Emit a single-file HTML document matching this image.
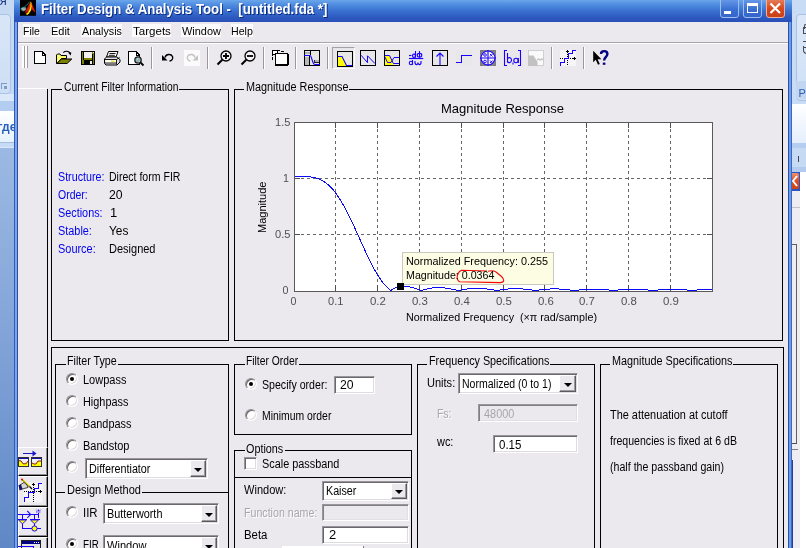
<!DOCTYPE html>
<html><head><meta charset="utf-8"><title>Filter Design &amp; Analysis Tool</title>
<style>
html,body{margin:0;padding:0;}
body{width:806px;height:548px;overflow:hidden;position:relative;background:#ebe9ed;font-family:"Liberation Sans",sans-serif;font-size:11px;color:#000;}
.a{position:absolute;}
.t{position:absolute;white-space:nowrap;line-height:12px;font-size:12px;transform-origin:0 0;margin-left:-0.5px;}
.p{font-size:10.67px;}
.lb{height:12px;background:#ebe9ed;}
.bl{color:#0000f0;}
.hl{position:absolute;height:1px;background:#000;}
.vl{position:absolute;width:1px;background:#000;}
.edit{position:absolute;background:#fff;box-sizing:border-box;border:1px solid;border-color:#98969a #fff #fff #98969a;box-shadow:inset 1px 1px 0 #6a686e, inset -1px -1px 0 #dedce0;}
.edit.dis{background:#ebe9ed;box-shadow:inset 1px 1px 0 #808080, inset -1px -1px 0 #e0e0e0;}
.dd{position:absolute;box-sizing:border-box;background:#ebe9ed;border:1px solid;border-color:#fff #5c5a5e #5c5a5e #fff;box-shadow:inset -1px -1px 0 #9c9a9e;}
.dd:after{content:"";position:absolute;left:50%;top:50%;margin:-1px 0 0 -4px;border:4px solid transparent;border-top:4px solid #000;border-bottom:none;}
.radio{position:absolute;width:12px;height:12px;box-sizing:border-box;border-radius:50%;background:#fff;border:1px solid;border-color:#908e92 #fff #fff #908e92;box-shadow:inset 1px 1px 0 #66646a, inset -1px -1px 0 #dcdade;}
.radio.on:after{content:"";position:absolute;left:3px;top:3px;width:4px;height:4px;border-radius:50%;background:#000;}
#root{position:absolute;left:0;top:0;width:806px;height:548px;overflow:hidden;will-change:transform;}
</style></head><body><div id="root">
<!-- left background strip (other app) -->
<div class="a" style="left:0;top:0;width:14px;height:548px;background:#c6d9f3;"></div>
<div class="a" style="left:-6px;top:14px;width:15px;height:78px;border:1px solid #aac3e6;border-radius:4px;background:linear-gradient(#d9e6f7,#cddff5);"></div>
<div class="a" style="left:0;top:94px;width:14px;height:8px;background:#dbe8f9;"></div>
<div class="a" style="left:0;top:101px;width:14px;height:10px;background:#b3cdf0;"></div>
<div class="a" style="left:0;top:111px;width:14px;height:31px;background:linear-gradient(#ffffff,#e6f2fc);"></div>
<div class="a" style="left:0;top:142px;width:14px;height:1px;background:#a5bedd;"></div>
<div class="a" style="left:0;top:143px;width:14px;height:4px;background:#c5dbf7;"></div>
<div class="a" style="left:0;top:147px;width:14px;height:1px;background:#dbe7f7;"></div>
<div class="a" style="left:0;top:148px;width:14px;height:400px;background:linear-gradient(#9bb9e2,#86a7da 40%,#5f88c6);"></div>
<div class="t" style="left:-7px;top:-6.5px;font-size:13px;line-height:13px;color:#1e3a8a;">ия</div>
<div class="t" style="left:-2px;top:121px;font-size:12px;line-height:13px;color:#2a5fc0;font-weight:bold;">где</div>
<div class="a" style="left:1px;top:83px;width:5px;height:5px;border:1px solid #7f9cc6;border-right:none;border-bottom:none;"></div>
<div class="a" style="left:4px;top:86px;width:3px;height:3px;background:#7f9cc6;"></div>

<!-- right background strip (other app) -->
<div class="a" style="left:792px;top:0;width:14px;height:548px;background:#fff;"></div>
<div class="a" style="left:792px;top:0;width:14px;height:104px;background:#c9dcf5;"></div>
<div class="a" style="left:796px;top:14px;width:14px;height:85px;border:1px solid #a9c2e4;border-radius:4px;background:linear-gradient(#dce8f8,#cfe0f6);"></div>
<div class="a" style="left:796px;top:81px;width:14px;height:18px;background:#c2d6f1;"></div>
<div class="a" style="left:803px;top:27px;width:4px;height:5px;border:1px solid #4a4a52;border-right:none;"></div><div class="a" style="left:804px;top:24px;width:4px;height:4px;border:1px solid #4a4a52;border-right:none;border-bottom:none;border-radius:2px 0 0 0;"></div>
<div class="a" style="left:803px;top:41px;width:5px;height:5px;border:1.5px solid #4a4a52;border-right:none;border-left:none;border-radius:0;"></div><div class="a" style="left:803px;top:46px;width:5px;height:7px;border:1.5px solid #4a4a52;border-right:none;border-top:none;border-radius:0 0 0 4px;"></div>
<div class="t" style="left:799px;top:87px;font-size:11px;color:#2d5fb5;">P</div>
<div class="a" style="left:792px;top:104px;width:14px;height:40px;background:linear-gradient(#ffffff,#e3edfb);"></div>
<div class="a" style="left:792px;top:143px;width:14px;height:5px;background:#b4cdf0;"></div>
<div class="a" style="left:792px;top:148px;width:14px;height:23px;background:#c7daf4;"></div>
<div class="a" style="left:798px;top:156px;width:1px;height:6px;background:#445;"></div>
<div class="a" style="left:792px;top:167px;width:14px;height:5px;background:#b2cbee;"></div>
<div class="a" style="left:792px;top:172px;width:14px;height:376px;background:#fff;"></div>
<div class="a" style="left:792px;top:172px;width:8px;height:376px;background:#efedf1;"></div>
<div class="a" style="left:792px;top:172px;width:8px;height:19px;background:#2a55c0;"></div>
<div class="a" style="left:792px;top:173px;width:7px;height:16px;border-radius:0 2px 2px 0;background:linear-gradient(#ee9270,#dc4c1e 50%,#d24418);"></div>
<svg class="a" style="left:792px;top:173px;" width="7" height="16"><path d="M5 3 L1 8 L5 13" stroke="#fff" stroke-width="2" fill="none"/></svg>
<div class="a" style="left:792px;top:207px;width:8px;height:1px;background:#c4c2c6;"></div>
<div class="a" style="left:792px;top:244px;width:5px;height:1px;background:#606060;"></div>
<div class="a" style="left:796px;top:244px;width:1px;height:200px;background:#606060;"></div>
<div class="a" style="left:792px;top:443px;width:5px;height:1px;background:#505050;"></div>
<div class="a" style="left:792px;top:449px;width:6px;height:1px;background:#808080;"></div>
<div class="a" style="left:791px;top:460px;width:2px;height:88px;background:#24409c;"></div>

<!-- window frame -->
<div class="a" style="left:14px;top:0;width:778px;height:548px;background:linear-gradient(90deg,#2e5cc0 0,#2e5cc0 1px,#7aa4e4 1px,#7aa4e4 3px,#2a4eb0 3px,#2a4eb0 4px);"></div>
<div class="a" style="left:14px;top:0;width:778px;height:22px;background:linear-gradient(#6ba6ea 0,#4f8ce0 22%,#3a70d0 50%,#2c58be 80%,#2a50b8 100%);"></div>
<div class="a" style="left:788px;top:22px;width:4px;height:526px;background:linear-gradient(90deg,#2a50b0 0,#2a50b0 1px,#6c9ce4 1px,#6c9ce4 3px,#3a68c8 3px,#3a68c8 4px);"></div>
<div class="a" style="left:18px;top:22px;width:770px;height:526px;background:#ebe9ed;"></div>

<!-- title icon -->
<svg class="a" style="left:20px;top:0;" width="16" height="16" viewBox="20 0 16 16">
<rect x="20" y="0" width="16" height="15.8" fill="#000"/>
<path d="M24.5 6.6 L27 5 L29.6 1.6" fill="none" stroke="#108080" stroke-width="0.9"/>
<path d="M20.8 8.6 L23 7.2 L25.6 7.4 L26 9.6 L24 11 L22 10.6 Z" fill="#a6a6a6" stroke="#28a8a8" stroke-width="0.6"/>
<path d="M25 11.5 L27 8 L29 4 L30.4 1.2 L30.6 6 L29.6 10 L27.2 13.6 L26 14 Z" fill="#b01008"/>
<path d="M27 10.2 L29.8 3.5 L30.6 8 L28.6 12 Z" fill="#e02808"/>
<path d="M26 14 L27 15 L28.6 14 L31 10.5 L32 6 L31.5 3 L30.8 1.5 L30.3 5 L29.8 9 L28 12.5 Z" fill="#ffee00"/>
<path d="M30.3 5.5 L30.8 1.5 L31.8 4.5 L31.9 7.2 L30.1 7.4 Z" fill="#ff9000"/>
<path d="M31.5 3 L33 6 L35.6 12.6 L34 11.6 L32.6 10 L31.7 9.6 L32 6 Z" fill="#e01800"/>
</svg>
<div class="t" style="left:41px;top:1px;font-size:14.5px;line-height:16px;font-weight:bold;color:#fff;text-shadow:1px 1px 0 #0a2a80;transform:scaleX(0.914);">Filter Design &amp; Analysis Tool -&nbsp; [untitled.fda *]</div>

<!-- caption buttons -->
<div class="a" style="left:720px;top:-3px;width:19px;height:21px;box-sizing:border-box;border:1px solid #9dbcf0;border-radius:3px;background:linear-gradient(#6ea0ea,#3a6fd2 60%,#3565c8);"></div>
<div class="a" style="left:724px;top:11px;width:7px;height:3px;background:#fff;"></div>
<div class="a" style="left:743px;top:-3px;width:19px;height:21px;box-sizing:border-box;border:1px solid #9dbcf0;border-radius:3px;background:linear-gradient(#6ea0ea,#3a6fd2 60%,#3565c8);"></div>
<div class="a" style="left:747px;top:3px;width:11px;height:10px;box-sizing:border-box;border:1px solid #fff;border-top:3px solid #fff;"></div>
<div class="a" style="left:766px;top:-3px;width:19px;height:21px;box-sizing:border-box;border:1px solid #f0b09a;border-radius:3px;background:linear-gradient(#e8896a,#d8481a 55%,#c8421a);"></div>
<svg class="a" style="left:766px;top:0;" width="19" height="18"><path d="M4.5 3.5 L14 13 M14 3.5 L4.5 13" stroke="#fff" stroke-width="2.2" fill="none"/></svg>

<!-- menu bar -->
<div class="a" style="left:18px;top:42px;width:770px;height:1px;background:#a8a6aa;"></div>
<div class="a" style="left:18px;top:43px;width:770px;height:1px;background:#fff;"></div>
<div class="a mnb" style="left:22.5px;width:17.5px;"></div><div class="t" style="left:23.5px;top:24.5px;font-size:11px;transform:scaleX(0.953);">File</div>
<div class="a mnb" style="left:50.5px;width:19.5px;"></div><div class="t" style="left:51.5px;top:24.5px;font-size:11px;transform:scaleX(0.996);">Edit</div>
<div class="a mnb" style="left:81.0px;width:40.5px;"></div><div class="t" style="left:82.0px;top:24.5px;font-size:11px;transform:scaleX(0.974);">Analysis</div>
<div class="a mnb" style="left:132.0px;width:38.5px;"></div><div class="t" style="left:133.0px;top:24.5px;font-size:11px;transform:scaleX(1.050);">Targets</div>
<div class="a mnb" style="left:181.0px;width:39.5px;"></div><div class="t" style="left:182.0px;top:24.5px;font-size:11px;transform:scaleX(0.994);">Window</div>
<div class="a mnb" style="left:230.5px;width:22.5px;"></div><div class="t" style="left:231.5px;top:24.5px;font-size:11px;transform:scaleX(0.968);">Help</div>
<style>.mnb{top:24px;height:13px;background:#fbfbfc;}</style>
<!-- toolbar -->
<style>
.sep{position:absolute;top:47px;width:1px;height:22px;background:#9a989c;box-shadow:1px 0 0 #fff;}
.ic{position:absolute;overflow:visible;shape-rendering:crispEdges;}
</style>
<div class="a" style="left:22px;top:46px;width:2px;height:22px;background:#fff;box-shadow:1px 0 0 #a09ea2;"></div>
<div class="a" style="left:25px;top:46px;width:2px;height:22px;background:#fff;box-shadow:1px 0 0 #a09ea2;"></div>
<!-- new -->
<svg class="ic" style="left:34px;top:51px;" width="12" height="14" viewBox="0 0 12 14"><path d="M0.5 0.5 H8 L11.5 4 V12.5 H0.5 Z" fill="#fff" stroke="#000"/><path d="M8 0.5 V4 H11.5" fill="none" stroke="#000"/></svg>
<!-- open -->
<svg class="ic" style="left:56px;top:51px;shape-rendering:auto;" width="17" height="14" viewBox="56 51 17 14"><path d="M56.5 63.5 V55 L57.5 54 H60 L61 55.5 H66.5 V58.5 H61.5 L57 63.5 Z" fill="#fbfb70" stroke="#000" stroke-width="1"/><path d="M57 63.5 L61.3 59 H71.8 L67 63.5 Z" fill="#808000" stroke="#000" stroke-width="1"/><path d="M63.3 52.6 C65 50.8 68.5 50.8 70.3 53" fill="none" stroke="#000" stroke-width="1.1"/><path d="M68 52.6 H71.4 L70.6 55.4 Z" fill="#000"/></svg>
<!-- save -->
<svg class="ic" style="left:81px;top:51px;" width="14" height="14" viewBox="0 0 14 14"><rect x="0.5" y="0.5" width="13" height="13" fill="#808000" stroke="#000"/><rect x="3" y="1" width="8" height="6" fill="#f0eff1"/><rect x="2" y="1" width="1" height="8" fill="#000"/><rect x="11" y="3" width="1" height="6" fill="#000"/><rect x="3" y="9" width="9" height="4" fill="#000"/><rect x="9" y="10" width="2" height="3" fill="#f0f0f0"/><rect x="12" y="1" width="1" height="1" fill="#f0f0f0"/></svg>
<!-- print -->
<svg class="ic" style="left:104px;top:51px;shape-rendering:auto;" width="17" height="15" viewBox="104 51 17 15"><path d="M108.5 51.5 H118 L116 57 H106.5 Z" fill="#fff" stroke="#000"/><path d="M109.5 53.5 H115.5 M108.8 55.3 H114.8" stroke="#000" stroke-width="0.9"/><path d="M104.5 59 L106.5 57 H116.5 L120 59.5 V62 L117 65 H106 L104.5 63.5 Z" fill="#e0e0e0" stroke="#000"/><path d="M105 59.5 H116.5 L119.5 57.5 M116.5 59.5 V64.5 M105 63 H116" fill="none" stroke="#000" stroke-width="0.9"/><rect x="105.5" y="60.2" width="10.5" height="2" fill="#fff"/><rect x="111" y="60.7" width="3.5" height="1.2" fill="#f0e000"/></svg>
<!-- preview -->
<svg class="ic" style="left:128px;top:51px;" width="17" height="16" viewBox="0 0 17 16"><path d="M0.5 0.5 H8 L11.5 4 V13.5 H0.5 Z" fill="#fff" stroke="#000"/><path d="M8 0.5 V4 H11.5" fill="none" stroke="#000"/><circle cx="10" cy="9" r="3.2" fill="#a4acb0" stroke="#202020" stroke-width="1.3" style="shape-rendering:auto"/><rect x="8.5" y="7" width="1.5" height="1.5" fill="#60f0f8"/><rect x="10.8" y="9.6" width="1.2" height="1.2" fill="#60f0f8"/><path d="M12.5 11.5 L15.5 14.5" stroke="#000" stroke-width="1.8" style="shape-rendering:auto"/></svg>
<div class="sep" style="left:151px;"></div>
<!-- undo -->
<svg class="ic" style="left:161px;top:52px;shape-rendering:auto;" width="14" height="11" viewBox="0 0 14 11"><path d="M4 5.5 C5 2 10 1.5 11.5 4.5 C12.5 7 10.5 9 8.5 9" fill="none" stroke="#000" stroke-width="1.4"/><path d="M1 3 V8.5 H6.5 Z" fill="#000"/></svg>
<!-- redo disabled -->
<div class="a" style="left:184px;top:50px;width:16px;height:16px;background:#fbfbfb;"></div>
<svg class="ic" style="left:185px;top:52px;shape-rendering:auto;" width="14" height="11" viewBox="0 0 14 11"><path d="M10 5.5 C9 2 4 1.5 2.5 4.5 C1.5 7 3.5 9 5.5 9" fill="none" stroke="#c4c4c4" stroke-width="1.4"/><path d="M13 3 V8.5 H7.5 Z" fill="#c4c4c4"/></svg>
<div class="sep" style="left:207px;"></div>
<!-- zoom in -->
<svg class="ic" style="left:216px;top:49px;shape-rendering:auto;" width="17" height="17" viewBox="0 0 17 17"><circle cx="10" cy="7" r="5" fill="#f4f4f4" stroke="#000" stroke-width="1.3"/><path d="M7 7 H13 M10 4 V10" stroke="#000" stroke-width="1.8"/><path d="M6.3 10.7 L1.5 15.5" stroke="#000" stroke-width="2"/></svg>
<!-- zoom out -->
<svg class="ic" style="left:240px;top:49px;shape-rendering:auto;" width="17" height="17" viewBox="0 0 17 17"><circle cx="10" cy="7" r="5" fill="#f4f4f4" stroke="#000" stroke-width="1.3"/><path d="M7 7 H13" stroke="#000" stroke-width="1.8"/><path d="M6.3 10.7 L1.5 15.5" stroke="#000" stroke-width="2"/></svg>
<div class="sep" style="left:263px;"></div>
<!-- full view -->
<svg class="ic" style="left:272px;top:50px;" width="16" height="16" viewBox="0 0 16 16"><path d="M0.5 10 V0.5 H9 " fill="none" stroke="#000" stroke-dasharray="3 1.5"/><path d="M0.5 0.5 H5 V4 H0.5 Z" fill="#fff" stroke="#000"/><rect x="3.5" y="3.5" width="12" height="11" fill="#fff" stroke="#000"/><path d="M3 15 H16 M16 4 V15" stroke="#000"/><path d="M9 1.5 H12" stroke="#000"/></svg>
<div class="sep" style="left:295px;"></div>
<!-- filter specs -->
<svg class="ic" style="left:304px;top:50px;" width="16" height="16" viewBox="0 0 16 16"><rect x="0.5" y="0.5" width="15" height="15" fill="#e6e6e6" stroke="#000"/><rect x="1" y="2" width="5" height="2" fill="#b0b0b0"/><rect x="1" y="7" width="5" height="8" fill="#b8b8b8"/><path d="M5.5 6 V15 M6.5 1 V5" stroke="#000"/><rect x="11" y="10" width="4" height="3" fill="#b0b0b0"/><path d="M10.5 10 V13 M11 12.5 H15" stroke="#000" stroke-width="0.8"/><path d="M0 5.5 H6 C8 5.5 8 14.5 11 14.5 H16" fill="none" stroke="#1a00ff" stroke-width="1.2" style="shape-rendering:auto"/></svg>
<div class="sep" style="left:327px;"></div>
<!-- magnitude (pressed) -->
<div class="a" style="left:332px;top:47px;width:23px;height:22px;box-sizing:border-box;background:#e7e6ea;border:1px solid;border-color:#a2a0a6 #fff #fff #a2a0a6;"></div>
<svg class="ic" style="left:337px;top:51px;" width="16" height="16" viewBox="337 51 16 16"><rect x="337.6" y="51.6" width="14.8" height="14.6" fill="#e6e6e6" stroke="#000" stroke-width="1.2"/><path d="M338.2 56.5 H342 L346.5 65.5 V65.6 H338.2 Z" fill="#ffff00"/><path d="M338 56.5 H342 L346.5 65.5 H352" fill="none" stroke="#1a00ff" stroke-width="1.1" style="shape-rendering:auto"/></svg>
<!-- phase -->
<svg class="ic" style="left:360px;top:50px;" width="16" height="16" viewBox="360 50 16 16"><rect x="360.6" y="50.6" width="14.8" height="14.8" fill="#e6e6e6" stroke="#000" stroke-width="1.2"/><path d="M361 55.2 L367.5 62.6 V55.8 L375 63.6" fill="none" stroke="#1a00ff" stroke-width="1" style="shape-rendering:auto"/></svg>
<!-- mag & phase -->
<svg class="ic" style="left:384px;top:50px;" width="16" height="16" viewBox="384 50 16 16"><rect x="384.6" y="50.6" width="14.8" height="14.8" fill="#e6e6e6" stroke="#000" stroke-width="1.2"/><path d="M385.2 55.5 H389.5 L393.4 63.5 V64.8 H385.2 Z" fill="#ffff00"/><path d="M385 55.5 H389.5 L393.4 63.5 H399" fill="none" stroke="#1a00ff" stroke-width="1" style="shape-rendering:auto"/><path d="M385 57 L387.5 62.5 H391 L394 57.5 H399" fill="none" stroke="#1a00ff" stroke-width="1" style="shape-rendering:auto"/></svg>
<!-- group delay -->
<svg class="ic" style="left:408px;top:50px;shape-rendering:auto;" width="16" height="16" viewBox="408 50 16 16"><rect x="408" y="50" width="16" height="16" fill="#e9e8eb"/><g fill="none" stroke="#1a00ff" stroke-width="1.1"><path d="M409 55.5 H411.5"/><path d="M415.5 51 V57.6"/><ellipse cx="414" cy="55.8" rx="1.5" ry="1.7"/><path d="M419.5 51 V57.6"/><ellipse cx="419.5" cy="55.2" rx="2.3" ry="1.8"/><path d="M409 58.5 H423.3" stroke-width="1.2"/><path d="M412.5 60 V64.9"/><ellipse cx="410.9" cy="63" rx="1.6" ry="1.8"/><path d="M415 61 C414.5 65.6 418 65.6 418 62.5 C418 65.6 421.5 65.6 421 61"/></g></svg>
<!-- impulse -->
<svg class="ic" style="left:432px;top:50px;" width="16" height="16" viewBox="0 0 16 16"><rect x="0.5" y="0.5" width="15" height="15" fill="#e6e6e6" stroke="#000" stroke-width="1.2"/><path d="M8 15 V3 M4.5 6.5 L8 3 L11.5 6.5" fill="none" stroke="#1a00ff" stroke-width="1.1" style="shape-rendering:auto"/></svg>
<!-- step -->
<div class="a" style="left:456px;top:50px;width:16px;height:16px;background:#e8e7e9;"></div>
<svg class="ic" style="left:456px;top:50px;" width="16" height="16" viewBox="0 0 16 16"><path d="M0 12.5 H5.5 V5.5 H16" fill="none" stroke="#1a00ff" stroke-width="1.1"/></svg>
<!-- pole zero -->
<svg class="ic" style="left:480px;top:50px;shape-rendering:auto;" width="16" height="16" viewBox="0 0 16 16"><rect width="16" height="16" fill="#808080"/><circle cx="8" cy="8" r="7" fill="#f4f4f4" stroke="#1a00ff" stroke-width="1.1"/><path d="M0 8 H16 M8 0 V16" stroke="#1a00ff" stroke-width="1.1"/><g fill="none" stroke="#1a00ff" stroke-width="0.9"><circle cx="5" cy="5" r="1.3"/><circle cx="5" cy="11.5" r="1.3"/><path d="M10 4 L12.5 6.5 M12.5 4 L10 6.5 M10 10.5 L12.5 13 M12.5 10.5 L10 13"/></g></svg>
<!-- [b,a] -->
<svg class="ic" style="left:504px;top:50px;shape-rendering:auto;" width="17" height="16" viewBox="0 0 17 16"><rect width="17" height="16" fill="#e8e7e9"/><g fill="none" stroke="#1a00ff" stroke-width="1.1"><path d="M3 0.5 H0.5 V15.5 H3"/><path d="M14 0.5 H16.5 V15.5 H14"/><path d="M3.5 3 V12.5 M3.5 9 C4 7 7.5 7 7.5 10 C7.5 13.5 4 13 3.5 11.5"/><circle cx="12" cy="10.5" r="2.2"/><path d="M14.3 8 V13"/><path d="M9 12.5 V14.5"/></g></svg>
<!-- disabled -->
<svg class="ic" style="left:528px;top:50px;" width="16" height="16" viewBox="528 50 16 16"><rect x="528.5" y="50.5" width="15" height="15" fill="#fafafa" stroke="#cfcfd2"/><path d="M528 55.5 H533.5 L537.5 62 V66 H528 Z" fill="#c2c2c2" style="shape-rendering:auto"/><path d="M537 60.2 L538.7 58.8 L540.3 60.2 L542 58.8 L544 60.2" fill="none" stroke="#c2c2c2" stroke-width="1.2" style="shape-rendering:auto"/></svg>
<div class="sep" style="left:551px;"></div>
<!-- quantization -->
<svg class="ic" style="left:560px;top:50px;" width="16" height="16" viewBox="560 50 16 16"><rect x="560" y="50" width="16" height="16" fill="#f6f5f7"/><path d="M560 58.5 H576 M567.5 52 V66" stroke="#000" stroke-dasharray="1 1"/><path d="M566 51.5 H569 M567.5 50 V53 M573 58.5 H576 M574.5 57 V60" stroke="#000"/><path d="M560.6 65.8 V62.4 H564.5 V58.6 H568.4 V53.8 H572.3 V50.6 H576" fill="none" stroke="#1a00ff" stroke-width="1.2"/></svg>
<div class="sep" style="left:583px;"></div>
<!-- help -->
<svg class="ic" style="left:593px;top:50px;shape-rendering:auto;" width="16" height="16" viewBox="593 50 16 16"><path d="M593.2 50.8 V62.2 L595.8 59.8 L598 64.8 L599.8 64 L597.6 59.2 H601.4 Z" fill="#000"/><path d="M601 54 C601 50.2 607.4 50.2 607.4 54 C607.4 56.8 604.1 57 604.1 60.6" fill="none" stroke="#000080" stroke-width="2.4"/><rect x="602.8" y="62.6" width="2.6" height="2.2" fill="#000080"/></svg>
<!-- outer guide lines -->
<div class="a" style="left:18px;top:88px;width:29px;height:1px;background:#fff;"></div>
<div class="vl" style="left:47px;top:89px;height:459px;"></div>

<!-- Current Filter Information -->
<div class="a" style="left:51px;top:89px;width:178px;height:252px;box-sizing:border-box;border:1px solid #000;"></div>
<div class="a lb" style="left:62px;top:81px;width:117px;"></div><div class="t" style="left:64px;top:81px;transform:scaleX(0.858);">Current Filter Information</div>
<div class="t bl" style="left:58px;top:170.5px;transform:scaleX(0.892);">Structure:</div>
<div class="t bl" style="left:58px;top:188.5px;transform:scaleX(0.873);">Order:</div>
<div class="t bl" style="left:58px;top:206.5px;transform:scaleX(0.904);">Sections:</div>
<div class="t bl" style="left:58px;top:224.5px;transform:scaleX(0.907);">Stable:</div>
<div class="t bl" style="left:58px;top:242.5px;transform:scaleX(0.912);">Source:</div>
<div class="t" style="left:109.3px;top:170.5px;transform:scaleX(0.878);">Direct form FIR</div>
<div class="t" style="left:109.3px;top:188.5px;transform:scaleX(1.018);">20</div>
<div class="t" style="left:110px;top:206.5px;transform:scaleX(1.077);">1</div>
<div class="t" style="left:109.3px;top:224.5px;transform:scaleX(0.991);">Yes</div>
<div class="t" style="left:109.3px;top:242.5px;transform:scaleX(0.917);">Designed</div>

<!-- Magnitude Response panel -->
<div class="a" style="left:234px;top:89px;width:549px;height:252px;box-sizing:border-box;border:1px solid #000;"></div>
<div class="a lb" style="left:244px;top:81px;width:105px;"></div><div class="t" style="left:246px;top:81px;transform:scaleX(0.903);">Magnitude Response</div>

<svg class="a" style="left:0;top:0;" width="806" height="548" viewBox="0 0 806 548">
<rect x="294.5" y="122.5" width="418" height="169" fill="#fff" stroke="#5a5a5a" stroke-width="1" shape-rendering="crispEdges"/>
<g stroke="#666666" stroke-width="1" stroke-dasharray="3 3" shape-rendering="crispEdges" fill="none">
<path d="M335.5 123 V291 M377.5 123 V291 M419.5 123 V291 M461.5 123 V291 M503.5 123 V291 M544.5 123 V291 M586.5 123 V291 M628.5 123 V291 M670.5 123 V291"/>
<path d="M295 178.5 H712 M295 234.5 H712"/>
</g>
<g stroke="#505050" stroke-width="1" shape-rendering="crispEdges">
<path d="M335.5 285 V291 M377.5 285 V291 M419.5 285 V291 M461.5 285 V291 M503.5 285 V291 M544.5 285 V291 M586.5 285 V291 M628.5 285 V291 M670.5 285 V291"/>
<path d="M335.5 123 V128 M377.5 123 V128 M419.5 123 V128 M461.5 123 V128 M503.5 123 V128 M544.5 123 V128 M586.5 123 V128 M628.5 123 V128 M670.5 123 V128"/>
<path d="M295 178.5 H300 M295 234.5 H300 M707 178.5 H712 M707 234.5 H712"/>
</g>
<polyline points="294.5,176.3 295.5,176.3 296.5,176.3 297.5,176.3 298.5,176.3 299.5,176.3 300.5,176.3 301.5,176.3 302.5,176.3 303.5,176.4 304.5,176.4 305.5,176.5 306.5,176.5 307.5,176.6 308.5,176.7 309.5,176.8 310.5,176.9 311.5,177.1 312.5,177.2 313.5,177.4 314.5,177.6 315.5,177.9 316.5,178.2 317.5,178.5 318.5,178.9 319.5,179.3 320.5,179.7 321.5,180.2 322.5,180.8 323.5,181.3 324.5,182.0 325.5,182.7 326.5,183.4 327.5,184.2 328.5,185.1 329.5,186.0 330.5,187.0 331.5,188.0 332.5,189.1 333.5,190.2 334.5,191.4 335.5,192.7 336.4,194.1 337.4,195.5 338.4,196.9 339.4,198.4 340.4,200.0 341.4,201.6 342.4,203.3 343.4,205.1 344.4,206.9 345.4,208.7 346.4,210.6 347.4,212.5 348.4,214.5 349.4,216.5 350.4,218.6 351.4,220.7 352.4,222.8 353.4,225.0 354.4,227.1 355.4,229.3 356.4,231.5 357.4,233.7 358.4,236.0 359.4,238.2 360.4,240.4 361.4,242.6 362.4,244.9 363.4,247.1 364.4,249.2 365.4,251.4 366.4,253.6 367.4,255.7 368.4,257.8 369.4,259.8 370.4,261.8 371.4,263.8 372.4,265.7 373.4,267.6 374.4,269.4 375.4,271.2 376.4,272.9 377.4,274.6 378.4,276.2 379.4,277.7 380.4,279.2 381.4,280.6 382.4,281.9 383.4,283.2 384.4,284.4 385.4,285.6 386.4,286.6 387.4,287.6 388.4,288.5 389.4,289.4 390.4,290.2 391.4,290.1 392.4,289.5 393.4,288.9 394.4,288.3 395.4,287.9 396.4,287.5 397.4,287.2 398.4,286.9 399.4,286.7 400.4,286.5 401.4,286.4 402.4,286.3 403.4,286.3 404.4,286.3 405.4,286.4 406.4,286.5 407.4,286.6 408.4,286.8 409.4,286.9 410.4,287.2 411.4,287.4 412.4,287.7 413.4,287.9 414.4,288.2 415.4,288.5 416.4,288.8 417.4,289.1 418.4,289.5 419.4,289.8 420.3,290.1 421.3,290.4 422.3,290.3 423.3,290.0 424.3,289.7 425.3,289.5 426.3,289.2 427.3,289.0 428.3,288.8 429.3,288.5 430.3,288.4 431.3,288.2 432.3,288.0 433.3,287.9 434.3,287.8 435.3,287.7 436.3,287.7 437.3,287.6 438.3,287.6 439.3,287.6 440.3,287.7 441.3,287.7 442.3,287.8 443.3,287.8 444.3,287.9 445.3,288.1 446.3,288.2 447.3,288.3 448.3,288.5 449.3,288.7 450.3,288.8 451.3,289.0 452.3,289.2 453.3,289.4 454.3,289.6 455.3,289.8 456.3,290.0 457.3,290.3 458.3,290.5 459.3,290.3 460.3,290.1 461.3,289.9 462.3,289.7 463.3,289.6 464.3,289.4 465.3,289.2 466.3,289.1 467.3,288.9 468.3,288.8 469.3,288.7 470.3,288.6 471.3,288.5 472.3,288.4 473.3,288.4 474.3,288.3 475.3,288.3 476.3,288.3 477.3,288.3 478.3,288.3 479.3,288.3 480.3,288.4 481.3,288.4 482.3,288.5 483.3,288.6 484.3,288.7 485.3,288.8 486.3,288.9 487.3,289.0 488.3,289.2 489.3,289.3 490.3,289.5 491.3,289.6 492.3,289.8 493.3,289.9 494.3,290.1 495.3,290.3 496.3,290.4 497.3,290.4 498.3,290.3 499.3,290.1 500.3,289.9 501.3,289.8 502.3,289.6 503.2,289.5 504.2,289.4 505.2,289.3 506.2,289.2 507.2,289.1 508.2,289.0 509.2,288.9 510.2,288.8 511.2,288.8 512.2,288.7 513.2,288.7 514.2,288.7 515.2,288.7 516.2,288.7 517.2,288.7 518.2,288.7 519.2,288.7 520.2,288.8 521.2,288.8 522.2,288.9 523.2,289.0 524.2,289.1 525.2,289.2 526.2,289.3 527.2,289.4 528.2,289.5 529.2,289.6 530.2,289.8 531.2,289.9 532.2,290.0 533.2,290.2 534.2,290.3 535.2,290.5 536.2,290.4 537.2,290.3 538.2,290.1 539.2,290.0 540.2,289.9 541.2,289.8 542.2,289.6 543.2,289.5 544.2,289.4 545.2,289.3 546.2,289.2 547.2,289.2 548.2,289.1 549.2,289.0 550.2,289.0 551.2,288.9 552.2,288.9 553.2,288.9 554.2,288.9 555.2,288.9 556.2,288.9 557.2,288.9 558.2,288.9 559.2,289.0 560.2,289.0 561.2,289.1 562.2,289.2 563.2,289.2 564.2,289.3 565.2,289.4 566.2,289.5 567.2,289.6 568.2,289.7 569.2,289.8 570.2,290.0 571.2,290.1 572.2,290.2 573.2,290.3 574.2,290.5 575.2,290.4 576.2,290.3 577.2,290.2 578.2,290.1 579.2,290.0 580.2,289.8 581.2,289.7 582.2,289.6 583.2,289.5 584.2,289.5 585.2,289.4 586.2,289.3 587.1,289.2 588.1,289.2 589.1,289.1 590.1,289.1 591.1,289.1 592.1,289.0 593.1,289.0 594.1,289.0 595.1,289.0 596.1,289.1 597.1,289.1 598.1,289.1 599.1,289.2 600.1,289.2 601.1,289.3 602.1,289.3 603.1,289.4 604.1,289.5 605.1,289.6 606.1,289.7 607.1,289.8 608.1,289.9 609.1,290.0 610.1,290.1 611.1,290.2 612.1,290.3 613.1,290.4 614.1,290.5 615.1,290.3 616.1,290.2 617.1,290.1 618.1,290.0 619.1,289.9 620.1,289.8 621.1,289.7 622.1,289.6 623.1,289.5 624.1,289.5 625.1,289.4 626.1,289.3 627.1,289.3 628.1,289.2 629.1,289.2 630.1,289.2 631.1,289.1 632.1,289.1 633.1,289.1 634.1,289.1 635.1,289.1 636.1,289.2 637.1,289.2 638.1,289.2 639.1,289.3 640.1,289.3 641.1,289.4 642.1,289.4 643.1,289.5 644.1,289.6 645.1,289.7 646.1,289.8 647.1,289.9 648.1,290.0 649.1,290.1 650.1,290.2 651.1,290.3 652.1,290.4 653.1,290.5 654.1,290.4 655.1,290.3 656.1,290.2 657.1,290.1 658.1,290.0 659.1,289.9 660.1,289.8 661.1,289.7 662.1,289.6 663.1,289.5 664.1,289.5 665.1,289.4 666.1,289.3 667.1,289.3 668.1,289.3 669.1,289.2 670.1,289.2 671.0,289.2 672.0,289.2 673.0,289.2 674.0,289.2 675.0,289.2 676.0,289.2 677.0,289.3 678.0,289.3 679.0,289.3 680.0,289.4 681.0,289.5 682.0,289.5 683.0,289.6 684.0,289.7 685.0,289.8 686.0,289.9 687.0,290.0 688.0,290.1 689.0,290.2 690.0,290.3 691.0,290.4 692.0,290.5 693.0,290.4 694.0,290.3 695.0,290.2 696.0,290.1 697.0,290.0 698.0,289.9 699.0,289.8 700.0,289.7 701.0,289.7 702.0,289.6 703.0,289.5 704.0,289.4 705.0,289.4 706.0,289.3 707.0,289.3 708.0,289.2 709.0,289.2 710.0,289.2 711.0,289.2 712.0,289.2" fill="none" stroke="#0a0af8" stroke-width="1" shape-rendering="crispEdges"/>
<rect x="402.5" y="252.5" width="151" height="32" fill="#fdfde4" stroke="#c8c8c0" stroke-width="1" shape-rendering="crispEdges"/>
<rect x="397" y="283" width="7" height="7" fill="#000" shape-rendering="crispEdges"/>
<path d="M487 271 L461.5 270.2 C457 272 455.5 279 459.5 281.7 L500 282.6 C505 282.6 504.5 279.5 501.5 276.5 L496 272 C494 270.6 491 270.6 488 271.3" fill="none" stroke="#f40808" stroke-width="1.1"/>
</svg>
<div class="t" style="left:441px;top:100.5px;font-size:13px;line-height:16px;transform:scaleX(1.002);">Magnitude Response</div>
<style>.tk{color:#505050;font-size:10.67px;}</style>
<div class="t tk" style="left:275px;top:116px;transform:scaleX(1.039);">1.5</div>
<div class="t tk" style="left:283.5px;top:172px;">1</div>
<div class="t tk" style="left:275px;top:228px;transform:scaleX(1.039);">0.5</div>
<div class="t tk" style="left:283px;top:284px;">0</div>
<div class="t tk" style="left:291px;top:294.5px;">0</div>
<div class="t tk" style="left:328.5px;top:294.5px;transform:scaleX(1.039);">0.1</div>
<div class="t tk" style="left:370.5px;top:294.5px;transform:scaleX(1.072);">0.2</div>
<div class="t tk" style="left:412px;top:294.5px;transform:scaleX(1.072);">0.3</div>
<div class="t tk" style="left:454px;top:294.5px;transform:scaleX(1.072);">0.4</div>
<div class="t tk" style="left:496px;top:294.5px;transform:scaleX(1.072);">0.5</div>
<div class="t tk" style="left:538px;top:294.5px;transform:scaleX(1.072);">0.6</div>
<div class="t tk" style="left:579.5px;top:294.5px;transform:scaleX(1.072);">0.7</div>
<div class="t tk" style="left:621px;top:294.5px;transform:scaleX(1.072);">0.8</div>
<div class="t tk" style="left:663px;top:294.5px;transform:scaleX(1.072);">0.9</div>
<div class="t p" style="left:406.7px;top:310.5px;transform:scaleX(1.008);">Normalized Frequency&nbsp; (×π rad/sample)</div>
<div class="t p" style="left:256px;top:233px;transform:rotate(-90deg) scaleX(1.033);">Magnitude</div>
<div class="t p" style="left:406.7px;top:254.5px;transform:scaleX(1.016);">Normalized Frequency: 0.255</div>
<div class="t p" style="left:406.7px;top:268.5px;transform:scaleX(1.001);">Magnitude: 0.0364</div>
<!-- lower design panel frame -->
<div class="a" style="left:51px;top:347px;width:733px;height:210px;box-sizing:border-box;border:1px solid #000;"></div>

<!-- Filter Type -->
<div class="a" style="left:55px;top:364px;width:174px;height:200px;box-sizing:border-box;border:1px solid #000;"></div>
<div class="a lb" style="left:65.5px;top:355px;width:52.3px;"></div><div class="t" style="left:67.5px;top:355px;transform:scaleX(0.890);">Filter Type</div>
<div class="radio on" style="left:66px;top:373px;"></div>
<div class="radio" style="left:66px;top:395px;"></div>
<div class="radio" style="left:66px;top:417px;"></div>
<div class="radio" style="left:66px;top:439px;"></div>
<div class="radio" style="left:66px;top:461px;"></div>
<div class="t" style="left:83.4px;top:374px;transform:scaleX(0.916);">Lowpass</div>
<div class="t" style="left:83.4px;top:396px;transform:scaleX(0.907);">Highpass</div>
<div class="t" style="left:83.4px;top:418px;transform:scaleX(0.907);">Bandpass</div>
<div class="t" style="left:83.4px;top:440px;transform:scaleX(0.915);">Bandstop</div>
<div class="edit" style="left:85px;top:458px;width:123px;height:21px;"></div>
<div class="dd" style="left:190px;top:460px;width:16px;height:17px;"></div>
<div class="t" style="left:89.6px;top:462.5px;transform:scaleX(0.897);">Differentiator</div>

<!-- Design Method -->
<div class="hl" style="left:55px;top:492px;width:174px;"></div>
<div class="a lb" style="left:65.3px;top:484px;width:76.5px;"></div><div class="t" style="left:67.3px;top:484px;transform:scaleX(0.916);">Design Method</div>
<div class="radio" style="left:66px;top:506px;"></div>
<div class="t" style="left:83.4px;top:507px;transform:scaleX(0.952);">IIR</div>
<div class="edit" style="left:103px;top:503px;width:116px;height:21px;"></div>
<div class="dd" style="left:201px;top:505px;width:16px;height:17px;"></div>
<div class="t" style="left:107.5px;top:507.5px;transform:scaleX(0.903);">Butterworth</div>
<div class="radio on" style="left:66px;top:538px;"></div>
<div class="t" style="left:83.4px;top:539px;transform:scaleX(0.822);">FIR</div>
<div class="edit" style="left:103px;top:535px;width:116px;height:21px;"></div>
<div class="dd" style="left:201px;top:537px;width:16px;height:17px;"></div>
<div class="t" style="left:107.5px;top:539.5px;transform:scaleX(0.923);">Window</div>

<!-- Filter Order -->
<div class="a" style="left:234px;top:364px;width:178px;height:71px;box-sizing:border-box;border:1px solid #000;"></div>
<div class="a lb" style="left:244.8px;top:355px;width:54.7px;"></div><div class="t" style="left:246.8px;top:355px;transform:scaleX(0.858);">Filter Order</div>
<div class="radio on" style="left:245px;top:378px;"></div>
<div class="t" style="left:262.7px;top:379px;transform:scaleX(0.883);">Specify order:</div>
<div class="edit" style="left:334px;top:376px;width:41px;height:18px;"></div>
<div class="t" style="left:340.4px;top:379px;transform:scaleX(1.018);">20</div>
<div class="radio" style="left:245px;top:409px;"></div>
<div class="t" style="left:262.7px;top:410px;transform:scaleX(0.867);">Minimum order</div>

<!-- Options -->
<div class="a" style="left:234px;top:450px;width:178px;height:110px;box-sizing:border-box;border:1px solid #000;"></div>
<div class="a lb" style="left:244.8px;top:442px;width:39.8px;"></div><div class="t" style="left:246.8px;top:442.5px;transform:scaleX(0.899);">Options</div>
<div class="edit" style="left:244px;top:457px;width:13px;height:13px;"></div>
<div class="t" style="left:262.7px;top:458px;transform:scaleX(0.906);">Scale passband</div>
<div class="hl" style="left:234px;top:477px;width:178px;"></div>
<div class="t" style="left:244.4px;top:484px;transform:scaleX(0.921);">Window:</div>
<div class="edit" style="left:322px;top:481px;width:87px;height:20px;"></div>
<div class="dd" style="left:391px;top:483px;width:16px;height:16px;"></div>
<div class="t" style="left:326.2px;top:484.5px;transform:scaleX(0.894);">Kaiser</div>
<div class="t" style="left:244.4px;top:507px;color:#a8a6aa;text-shadow:1px 1px 0 #fff;transform:scaleX(0.887);">Function name:</div>
<div class="edit dis" style="left:322px;top:504px;width:87px;height:17px;"></div>
<div class="t" style="left:244.4px;top:529px;transform:scaleX(0.948);">Beta</div>
<div class="edit" style="left:322px;top:526px;width:87px;height:18px;"></div>
<div class="t" style="left:329.2px;top:529px;transform:scaleX(1.077);">2</div>
<div class="a" style="left:282px;top:546px;width:82px;height:2px;background:#fff;box-shadow:inset -1px 0 0 #808080;"></div>

<!-- Frequency Specifications -->
<div class="a" style="left:417px;top:364px;width:178px;height:200px;box-sizing:border-box;border:1px solid #000;"></div>
<div class="a lb" style="left:427.4px;top:355px;width:123px;"></div><div class="t" style="left:429.4px;top:355px;transform:scaleX(0.898);">Frequency Specifications</div>
<div class="t" style="left:427.4px;top:377px;transform:scaleX(0.919);">Units:</div>
<div class="edit" style="left:458px;top:373px;width:120px;height:21px;"></div>
<div class="dd" style="left:559px;top:375px;width:17px;height:17px;"></div>
<div class="t" style="left:462.6px;top:377.5px;transform:scaleX(0.876);">Normalized (0 to 1)</div>
<div class="t" style="left:437.3px;top:407.5px;color:#a8a6aa;text-shadow:1px 1px 0 #fff;transform:scaleX(0.864);">Fs:</div>
<div class="edit dis" style="left:478px;top:404px;width:100px;height:18px;"></div>
<div class="t" style="left:484.4px;top:407.5px;color:#a8a6aa;transform:scaleX(0.911);">48000</div>
<div class="t" style="left:437.8px;top:435.5px;transform:scaleX(0.911);">wc:</div>
<div class="edit" style="left:493px;top:435px;width:85px;height:18px;"></div>
<div class="t" style="left:499.3px;top:438.5px;transform:scaleX(0.959);">0.15</div>

<!-- Magnitude Specifications -->
<div class="a" style="left:600px;top:364px;width:178px;height:200px;box-sizing:border-box;border:1px solid #000;"></div>
<div class="a lb" style="left:610.3px;top:355px;width:123px;"></div><div class="t" style="left:612.3px;top:355px;transform:scaleX(0.902);">Magnitude Specifications</div>
<div class="t" style="left:610.8px;top:409px;transform:scaleX(0.910);">The attenuation at cutoff</div>
<div class="t" style="left:610.8px;top:435px;transform:scaleX(0.881);">frequencies is fixed at 6 dB</div>
<div class="t" style="left:610.8px;top:461px;transform:scaleX(0.886);">(half the passband gain)</div>
<!-- sidebar buttons -->
<style>.sb{position:absolute;left:18px;width:30px;box-sizing:border-box;background:#ebe9ed;border:1px solid;border-color:#fff #000 #000 #fff;box-shadow:inset -1px -1px 0 #8c8a8e;}</style>
<div class="sb" style="top:447px;height:29px;"></div>
<div class="sb" style="top:476px;height:31px;"></div>
<div class="sb" style="top:507px;height:30px;"></div>
<div class="sb" style="top:537px;height:20px;"></div>
<svg class="a" style="left:18px;top:447px;" width="30" height="101" viewBox="18 447 30 101">
<!-- icon1: two boxes with arrow -->
<g shape-rendering="crispEdges">
<path d="M23 453.5 H35" stroke="#1818c8" stroke-width="1.2"/>
<path d="M32.5 450.5 L36.5 453.5 L32.5 456.5 Z" fill="#1818c8" shape-rendering="auto"/>
<rect x="18.5" y="457.5" width="10" height="9" fill="#f2f2f2" stroke="#303030"/>
<path d="M19 458 H28 V459 H26 V458.6 H24.5 V459 H19 Z" fill="#1010b0"/>
<path d="M19 461 H21 L23 464 H26 L28 461.5 V466 H19 Z" fill="#ffff00"/>
<path d="M19 460.8 H21 L23 463.8 H26 L28 461" fill="none" stroke="#800000" stroke-width="0.9" shape-rendering="auto"/>
<rect x="31.5" y="457.5" width="10" height="9" fill="#f2f2f2" stroke="#303030"/>
<path d="M32 458 H41 V459 H39.5 V458.6 H38 V459 H32 Z" fill="#1010b0"/>
<path d="M32 463 L34 464 H36 L38 461 H41 V466 H32 Z" fill="#ffff00"/>
<path d="M32 463 L34 464 H36 L38 461 H41" fill="none" stroke="#800000" stroke-width="0.9" shape-rendering="auto"/>
</g>
<!-- icon2: quantizer with pencil -->
<rect x="23.5" y="482.5" width="19" height="20" fill="#f5f4f6"/>
<g shape-rendering="crispEdges">
<path d="M24 491.5 H41 M33.5 483 V502" stroke="#000" stroke-dasharray="1 1"/>
<path d="M32 484.5 H35 M33.5 483 V486 M39 491.5 H42 M40.5 490 V493" stroke="#000"/>
<path d="M24.5 502 V497.5 H28.5 V492.5 H34.5 V488.5 H38.5 V483.5 H42" fill="none" stroke="#1a00ff" stroke-width="1.2"/>
</g>
<path d="M22 479.5 L29.5 486.5" stroke="#f0e000" stroke-width="1.8"/>
<path d="M29.5 486.5 L32 489" stroke="#000" stroke-width="1.2"/>
<circle cx="22" cy="479.5" r="1.1" fill="#e01010"/>
<path d="M22.5 480 L29 486.8" stroke="#303030" stroke-width="0.6"/>
<path d="M20 485 L24 482.5 L27 485 L28 487.5 L24 488.5 L21 489.5 Z" fill="#d8d8d8" stroke="#202020" stroke-width="0.8"/>
<path d="M18.5 485 L21 484.5 L22.5 489 L19.5 490.5 Z" fill="#101060"/>
<!-- icon3: realize model -->
<g fill="none" stroke="#1a00ff" stroke-width="1.2" shape-rendering="crispEdges">
<path d="M18 514.5 H39 M22.5 514.5 V519.5 M34.5 514.5 V519.5 M18 519.5 H26.5 M30 519.5 H39.5"/>
<path d="M22.5 523 V528.5 H32 M37 528.5 H41 M34.5 523 V526"/>
<path d="M38.5 513 V518"/>
</g>
<path d="M18.5 520 H26.5 L22.5 523.8 Z" fill="#ffff00" stroke="#1a00ff" stroke-width="0.9"/>
<path d="M30.5 520 H38.5 L34.5 523.8 Z" fill="#ffff00" stroke="#1a00ff" stroke-width="0.9"/>
<circle cx="34.5" cy="528.5" r="2.6" fill="#ffff00" stroke="#1a00ff" stroke-width="1"/>
<path d="M27.3 511 L30.6 514.4 L27.3 518" fill="none" stroke="#1a00ff" stroke-width="1.1"/>
<path d="M36 512 H41 M38.5 509.5 V512 M36.3 509.7 L37.6 511 M40.7 509.7 L39.4 511" stroke="#1a00ff" stroke-width="0.9" stroke-dasharray="1.5 0.8"/>
<!-- icon4: window -->
<rect x="21.5" y="540.5" width="19" height="10" fill="#e4e3e5" stroke="#202020" stroke-width="1" shape-rendering="crispEdges"/>
<rect x="22" y="541" width="18" height="3" fill="#000080" shape-rendering="crispEdges"/>
<path d="M34 542.5 H35 M36 542.5 H37 M38 542.5 H39" stroke="#fff" shape-rendering="crispEdges"/>
<path d="M18 546.5 H33.5 V549" fill="none" stroke="#1a00ff" stroke-width="1.4" shape-rendering="crispEdges"/>
</svg>
</div></body></html>
